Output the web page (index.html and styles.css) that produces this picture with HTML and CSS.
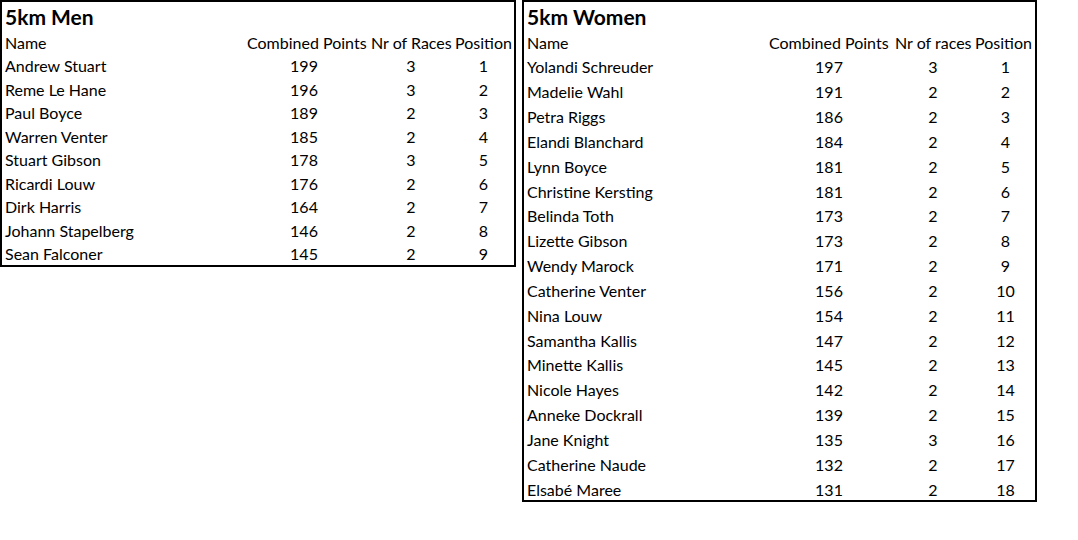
FILE: index.html
```html
<!DOCTYPE html>
<html>
<head>
<meta charset="utf-8">
<link rel="stylesheet" href="styles.css">
</head>
<body>
<div class="page">
  <div class="box men">
    <div class="title">5km Men</div>
    <div class="grid">
      <div class="hd c1">Name</div><div class="hd c2">Combined Points</div><div class="hd c3">Nr of Races</div><div class="hd c4">Position</div>
      <div class="c1">Andrew Stuart</div><div class="c2 n">199</div><div class="c3 n">3</div><div class="c4 n">1</div>
      <div class="c1">Reme Le Hane</div><div class="c2 n">196</div><div class="c3 n">3</div><div class="c4 n">2</div>
      <div class="c1">Paul Boyce</div><div class="c2 n">189</div><div class="c3 n">2</div><div class="c4 n">3</div>
      <div class="c1">Warren Venter</div><div class="c2 n">185</div><div class="c3 n">2</div><div class="c4 n">4</div>
      <div class="c1">Stuart Gibson</div><div class="c2 n">178</div><div class="c3 n">3</div><div class="c4 n">5</div>
      <div class="c1">Ricardi Louw</div><div class="c2 n">176</div><div class="c3 n">2</div><div class="c4 n">6</div>
      <div class="c1">Dirk Harris</div><div class="c2 n">164</div><div class="c3 n">2</div><div class="c4 n">7</div>
      <div class="c1">Johann Stapelberg</div><div class="c2 n">146</div><div class="c3 n">2</div><div class="c4 n">8</div>
      <div class="c1">Sean Falconer</div><div class="c2 n">145</div><div class="c3 n">2</div><div class="c4 n">9</div>
    </div>
  </div>
  <div class="box women">
    <div class="title">5km Women</div>
    <div class="grid">
      <div class="hd c1">Name</div><div class="hd c2">Combined Points</div><div class="hd c3">Nr of races</div><div class="hd c4">Position</div>
      <div class="c1">Yolandi Schreuder</div><div class="c2 n">197</div><div class="c3 n">3</div><div class="c4 n">1</div>
      <div class="c1">Madelie Wahl</div><div class="c2 n">191</div><div class="c3 n">2</div><div class="c4 n">2</div>
      <div class="c1">Petra Riggs</div><div class="c2 n">186</div><div class="c3 n">2</div><div class="c4 n">3</div>
      <div class="c1">Elandi Blanchard</div><div class="c2 n">184</div><div class="c3 n">2</div><div class="c4 n">4</div>
      <div class="c1">Lynn Boyce</div><div class="c2 n">181</div><div class="c3 n">2</div><div class="c4 n">5</div>
      <div class="c1">Christine Kersting</div><div class="c2 n">181</div><div class="c3 n">2</div><div class="c4 n">6</div>
      <div class="c1">Belinda Toth</div><div class="c2 n">173</div><div class="c3 n">2</div><div class="c4 n">7</div>
      <div class="c1">Lizette Gibson</div><div class="c2 n">173</div><div class="c3 n">2</div><div class="c4 n">8</div>
      <div class="c1">Wendy Marock</div><div class="c2 n">171</div><div class="c3 n">2</div><div class="c4 n">9</div>
      <div class="c1">Catherine Venter</div><div class="c2 n">156</div><div class="c3 n">2</div><div class="c4 n">10</div>
      <div class="c1">Nina Louw</div><div class="c2 n">154</div><div class="c3 n">2</div><div class="c4 n">11</div>
      <div class="c1">Samantha Kallis</div><div class="c2 n">147</div><div class="c3 n">2</div><div class="c4 n">12</div>
      <div class="c1">Minette Kallis</div><div class="c2 n">145</div><div class="c3 n">2</div><div class="c4 n">13</div>
      <div class="c1">Nicole Hayes</div><div class="c2 n">142</div><div class="c3 n">2</div><div class="c4 n">14</div>
      <div class="c1">Anneke Dockrall</div><div class="c2 n">139</div><div class="c3 n">2</div><div class="c4 n">15</div>
      <div class="c1">Jane Knight</div><div class="c2 n">135</div><div class="c3 n">3</div><div class="c4 n">16</div>
      <div class="c1">Catherine Naude</div><div class="c2 n">132</div><div class="c3 n">2</div><div class="c4 n">17</div>
      <div class="c1">Elsabé Maree</div><div class="c2 n">131</div><div class="c3 n">2</div><div class="c4 n">18</div>
    </div>
  </div>
</div>
</body>
</html>
```

FILE: styles.css
```css
html, body {
  margin: 0;
  padding: 0;
  background: #ffffff;
}
body {
  font-family: Lato, "Open Sans", sans-serif;
  color: #000000;
}
.page {
  display: flex;
  align-items: flex-start;
  gap: 6px;
}
.box {
  border: 2px solid #000000;
  box-sizing: border-box;
  overflow: hidden;
}
.title {
  font-weight: bold;
  font-size: 21px;
  padding-left: 3px;
  white-space: nowrap;
}
.grid {
  display: grid;
  white-space: nowrap;
  font-size: 16px;
}
.grid > div {
  overflow: visible;
}
.c1 { padding-left: 3px; }
.n { text-align: center; }

.men {
  width: 516px;
  height: 267px;
}
.men .title {
  height: 29px;
  line-height: 30px;
}
.men .grid {
  grid-template-columns: 243px 118px 96px 55px;
  grid-auto-rows: 23.44px;
  line-height: 23.44px;
}
.men .hd.c2 { padding-left: 2px; }
.men .hd.c3 { padding-left: 8px; }
.men .hd.c4 { margin-left: -4px; }
.men .c4.n { padding-right: 6px; }

.women {
  width: 515px;
  height: 502px;
}
.women .title {
  height: 28.6px;
  line-height: 30px;
}
.women .grid {
  grid-template-columns: 243px 127px 82px 59px;
  grid-auto-rows: 24.83px;
  line-height: 24.83px;
}
.women .hd.c2 { padding-left: 2px; }
.women .hd.c3 { padding-left: 1px; }
.women .hd.c4 { margin-left: -1px; }
.women .c2.n { padding-right: 3px; }
.women .c3.n { padding-right: 4px; }
```
